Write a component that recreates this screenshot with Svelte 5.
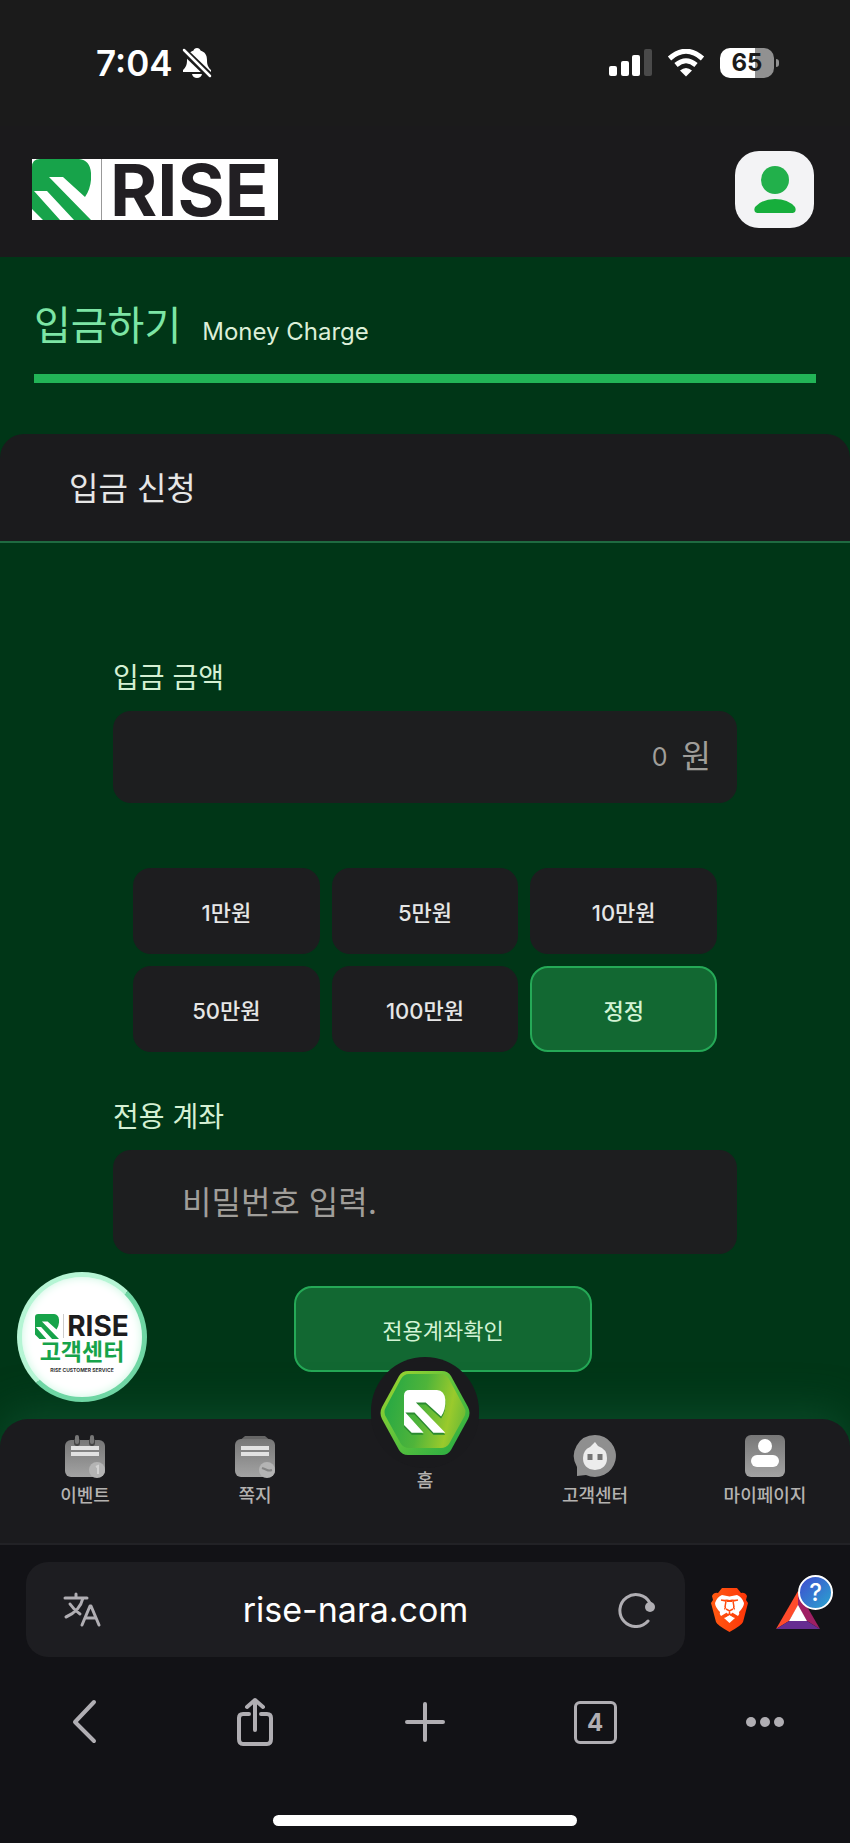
<script>
  let amount = $state('')
  let password = $state('')
  let address = $state('rise-nara.com')

  const presets = [
    { label: '1만원', value: 10000 },
    { label: '5만원', value: 50000 },
    { label: '10만원', value: 100000 },
    { label: '50만원', value: 500000 },
    { label: '100만원', value: 1000000 }
  ]

  function addAmount(value) {
    amount = String(Number(amount || 0) + value)
  }

  function resetAmount() {
    amount = ''
  }
</script>

{#snippet emblem(color)}
  <path fill={color} d="M0 50V8Q0 0 8 0H47Q58 1 59 14Q60 28 53 38L31 18H17L59 61H42L15 32H2L28 61H11Z" />
{/snippet}

<div class="app">
  <div class="status">
    <div class="status-side">
      <span class="time">7:04</span>
      <svg width="32" height="32" viewBox="0 0 32 32" aria-label="무음">
        <path fill="#fff" d="M16 1c2 0 3 1 3.500 2.500C24 5 26 8 26 13c0 5 1 7 4 10v2H2v-2c3-3 4-5 4-10 0-5 2-8 6.500-9.500C13 2 14 1 16 1zM11 27h10c-.5 2.500-2.500 4-5 4s-4.500-1.500-5-4z" />
        <path stroke="#1b1b1b" stroke-width="7" d="M1 2L30 30" />
        <path stroke="#fff" stroke-width="2.500" stroke-linecap="round" d="M3 3L29 29" />
      </svg>
    </div>
    <div class="status-side right">
      <svg width="43" height="28" viewBox="0 0 43 28" aria-hidden="true">
        <rect x="0" y="17" width="8" height="10" rx="2" fill="#fff" />
        <rect x="12" y="12" width="8" height="15" rx="2" fill="#fff" />
        <rect x="23" y="6" width="8" height="21" rx="2" fill="#fff" />
        <rect x="35" y="0" width="8" height="27" rx="2" fill="#4a4a4a" />
      </svg>
      <svg width="38" height="28" viewBox="0 0 38 28" aria-hidden="true">
        <path fill="none" stroke="#fff" stroke-width="5" d="M2.500 9.500Q19-5 35.500 9.500M9 16Q19 7.500 29 16" />
        <path fill="#fff" d="M19 27.500l-6-6q6-5 12 0z" />
      </svg>
      <div class="battery"><span>65</span></div>
    </div>
  </div>

  <header>
    <a class="logo" href="#home" aria-label="RISE">
      <svg width="59" height="61" viewBox="0 0 59 61">{@render emblem('#17a34a')}</svg>
      <span>RISE</span>
    </a>
    <button class="profile" aria-label="내 정보">
      <svg width="42" height="48" viewBox="0 0 42 48">
        <circle cx="21" cy="14" r="14" fill="#22b04b" />
        <path fill="#17ae3c" d="M3 47Q-1 46 1 41Q8 33 21 33T41 41Q43 46 39 47Z" />
      </svg>
    </button>
  </header>

  <main>
    <div class="page-title">
      <h1>입금하기</h1>
      <span>Money Charge</span>
    </div>

    <h2>입금 신청</h2>

    <form onsubmit={(e) => e.preventDefault()}>
      <label for="amount">입금 금액</label>
      <div class="field amount">
        <input id="amount" type="text" inputmode="numeric" placeholder="0" bind:value={amount} />
        <span>원</span>
      </div>

      <div class="presets">
        {#each presets as preset}
          <button type="button" onclick={() => addAmount(preset.value)}>{preset.label}</button>
        {/each}
        <button type="button" class="green" onclick={resetAmount}>정정</button>
      </div>

      <label for="password">전용 계좌</label>
      <div class="field password">
        <input id="password" type="password" placeholder="비밀번호 입력." bind:value={password} />
      </div>

      <button class="submit green">전용계좌확인</button>
    </form>
  </main>

  <div class="bottom">
    <a class="support" href="#support">
      <span class="support-logo">
        <svg width="24" height="25" viewBox="0 0 59 61">{@render emblem('#17a34a')}</svg>
        <b>RISE</b>
      </span>
      <strong>고객센터</strong>
      <small>RISE CUSTOMER SERVICE</small>
    </a>

    <nav class="tabs">
      <a href="#event">
        <svg width="44" height="44" viewBox="0 0 44 44">
          <defs>
            <linearGradient id="metal" x1="0" y1="0" x2="0" y2="1">
              <stop offset="0" stop-color="#777" />
              <stop offset="1" stop-color="#a3a3a3" />
            </linearGradient>
          </defs>
          <rect x="2" y="6" width="40" height="37" rx="6" fill="url(#metal)" />
          <path stroke="#444" stroke-width="6" stroke-linecap="round" d="M14 7v2M29 7v2" />
          <path stroke="#777" stroke-width="4" stroke-linecap="round" d="M14 3v5M29 3v5" />
          <path stroke="#e2e2e2" stroke-width="4" d="M8 14h28M8 20h28" />
          <circle cx="34" cy="36" r="8" fill="#b4b4b4" />
          <path stroke="#d2d2d2" stroke-width="2" fill="none" d="M33 33l2-1v8" />
        </svg>
        이벤트
      </a>
      <a href="#message">
        <svg width="44" height="44" viewBox="0 0 44 44">
          <path d="M12 2h20l7 6H5z" fill="#666" />
          <rect x="2" y="5" width="40" height="38" rx="6" fill="url(#metal)" />
          <path stroke="#e2e2e2" stroke-width="4" d="M8 14h28M8 20h28" />
          <circle cx="34" cy="36" r="8" fill="#b4b4b4" />
          <path stroke="#858585" stroke-width="2" fill="none" d="M29 34q3 1 5 2t5 0" />
        </svg>
        쪽지
      </a>
      <a class="home" href="#home">
        <span class="disc">
          <svg width="90" height="84" viewBox="0 0 90 84">
            <defs>
              <linearGradient id="hex" x1="0" y1="0.4" x2="1" y2="0.6">
                <stop offset="0" stop-color="#27a844" />
                <stop offset="0.45" stop-color="#4fb43a" />
                <stop offset="0.8" stop-color="#9aca2c" />
                <stop offset="1" stop-color="#6dbb35" />
              </linearGradient>
              <linearGradient id="rim" x1="0" y1="0" x2="1" y2="1">
                <stop offset="0" stop-color="#a5d62e" />
                <stop offset="0.5" stop-color="#5cc23c" />
                <stop offset="1" stop-color="#22a943" />
              </linearGradient>
            </defs>
            <path fill="url(#rim)" d="M28 0H62Q68 0 71 5L88 36Q91 42 88 48L71 79Q68 84 62 84H28Q22 84 19 79L2 48Q-1 42 2 36L19 5Q22 0 28 0Z" />
            <path fill="url(#hex)" d="M29 3H61Q66 3 69 8L84 36Q87 41 84 46L69 73Q66 77 61 77H29Q24 77 21 73L6 46Q3 41 6 36L21 8Q24 3 29 3Z" />
            <g transform="translate(24 21) scale(0.7)">{@render emblem('#2b8a30')}</g>
            <g transform="translate(24 19) scale(0.7)">{@render emblem('#fff')}</g>
          </svg>
        </span>
        홈
      </a>
      <a href="#help">
        <svg width="44" height="44" viewBox="0 0 44 44">
          <path fill="#8f8f8f" d="M22 1a21 21 0 1 1-9 40l-9 1V33A21 21 0 0 1 22 1z" />
          <path fill="#ececec" d="M22 8l3 4q9 3 9 12 0 11-12 12-12-1-12-12 0-8 7-11z" />
          <path stroke="#757575" stroke-width="5" d="M17 20v6M27 20v6" />
        </svg>
        고객센터
      </a>
      <a href="#mypage">
        <svg width="44" height="44" viewBox="0 0 44 44">
          <rect x="2" y="1" width="40" height="42" rx="6" fill="url(#metal)" />
          <circle cx="22" cy="12" r="7" fill="#fff" />
          <rect x="8" y="21" width="28" height="12" rx="6" fill="#fff" />
        </svg>
        마이페이지
      </a>
    </nav>
  </div>

  <footer>
    <div class="address-row">
      <div class="address">
        <button class="translate" aria-label="번역">
          <svg width="38" height="35" viewBox="0 0 38 35">
            <path fill="none" stroke="#b0aeb3" stroke-width="3" stroke-linecap="round" stroke-linejoin="round" d="M2 6H24M13 2v4M20 6Q17 19 3 25M7 12Q11 18 17 22M19 33L27 14H28L36 33M22 26H33" />
          </svg>
        </button>
        <input type="text" aria-label="주소" bind:value={address} />
        <button aria-label="새로고침">
          <svg width="38" height="36" viewBox="0 0 38 36">
            <path fill="none" stroke="#b0aeb3" stroke-width="3" stroke-linecap="round" d="M32 11A16 16 0 1 0 30 29" />
            <circle cx="32" cy="15" r="5" fill="#b0aeb3" />
          </svg>
        </button>
      </div>
      <button class="ext" aria-label="Brave Shields">
        <svg width="37" height="44" viewBox="0 0 37 44">
          <defs>
            <linearGradient id="lion" x1="0" y1="0" x2="1" y2="0">
              <stop offset="0" stop-color="#ff5a12" />
              <stop offset="1" stop-color="#ff3508" />
            </linearGradient>
          </defs>
          <path fill="url(#lion)" d="M11 0H26L30 5Q34 4 36 8L35 12L37 15L32 34Q31 37 18.500 44Q6 37 5 34L0 15L2 12L1 8Q3 4 7 5Z" />
          <path fill="#fff" d="M11 7L18.500 8.500L26 7Q31 9 33 15Q33 19 28 24Q29 26 27 28L22 25Q21 24 23 23L24 20L22 18L21 13L27 12L21 11.500L18.500 12L16 11.500L10 12L16 13L15 18L13 20L14 23Q16 24 15 25L10 28Q8 26 9 24Q4 19 4 15Q6 9 11 7Z" />
          <path fill="#fff" d="M15 14h7v6l2 3-5.500 4-5.500-4 2-3z" />
          <path fill="#fff" d="M18.500 27L24 30L18.500 35L13 30Z" />
          <path fill="none" stroke="#ff4a0d" stroke-width="1.500" d="M10 12l5 1-1 6M27 12l-5 1 1 6M15 21l3.500 2L22 21M18.500 23v3l-5 3M18.500 26l5 3" />
        </svg>
      </button>
      <button class="ext rewards" aria-label="Brave Rewards">
        <svg width="44" height="38" viewBox="0 0 44 38">
          <path fill="#ff4b2b" d="M22 0V15L13 30L0 38Z" />
          <path fill="#9e1f63" d="M22 0L44 38L31 30L22 15Z" />
          <path fill="#662d91" d="M0 38L13 30H31L44 38Z" />
          <path fill="#fff" d="M22 14L31 30H13Z" />
        </svg>
        <span class="badge">?</span>
      </button>
    </div>

    <div class="toolbar">
      <button aria-label="뒤로">
        <svg width="48" height="48" viewBox="0 0 48 48"><path d="M33 4L14 24L33 43" /></svg>
      </button>
      <button aria-label="공유">
        <svg width="48" height="50" viewBox="0 0 48 50">
          <path d="M18 17H12Q8 17 8 21V42Q8 47 12 47H36Q40 47 40 42V21Q40 17 36 17H30M24 33V3M16 10L24 3L32 10" />
        </svg>
      </button>
      <button aria-label="새 탭">
        <svg width="48" height="48" viewBox="0 0 48 48"><path d="M24 6V42M6 24H42" /></svg>
      </button>
      <button aria-label="탭"><span class="count">4</span></button>
      <button aria-label="메뉴">
        <svg width="40" height="12" viewBox="0 0 40 12" class="dots">
          <circle cx="6" cy="6" r="5" /><circle cx="20" cy="6" r="5" /><circle cx="34" cy="6" r="5" />
        </svg>
      </button>
    </div>
    <div class="indicator"></div>
  </footer>
</div>

<style>
  :global(body) {
    background: #121216;
  }

  .app {
    display: flex;
    flex-direction: column;
    min-height: 100vh;
    background: #003617;
    color: #e6e6e6;
    font-family: Inter, "Noto Sans CJK KR", sans-serif;
  }

  .app * {
    box-sizing: border-box;
  }

  button {
    padding: 0;
    border: 0;
    background: none;
    color: inherit;
    font: inherit;
    cursor: pointer;
  }

  input {
    min-width: 0;
    padding: 0;
    border: 0;
    outline: 0;
    background: none;
    color: #e6e6e6;
    font: inherit;
  }

  a {
    color: inherit;
    text-decoration: none;
  }

  svg {
    display: block;
    flex: none;
  }

  /* status bar */
  .status {
    display: flex;
    justify-content: space-between;
    align-items: center;
    height: 126px;
    padding: 0 70px 0 96px;
    background: #1b1b1b;
  }

  .status-side {
    display: flex;
    align-items: center;
    gap: 8px;
  }

  .right {
    gap: 15px;
  }

  .time {
    color: #fff;
    font-size: 35px;
    font-weight: 600;
  }

  .battery {
    position: relative;
    width: 54px;
    height: 30px;
    margin-right: 6px;
    border-radius: 10px;
    background: linear-gradient(90deg, #fff 65%, #919191 65%);
    color: #1b1b1b;
    font-size: 24px;
    font-weight: 700;
    line-height: 30px;
    text-align: center;
  }

  .battery::after {
    content: "";
    position: absolute;
    top: 11px;
    right: -5px;
    width: 3px;
    height: 8px;
    border-radius: 0 4px 4px 0;
    background: #919191;
  }

  /* site header */
  header {
    display: flex;
    justify-content: space-between;
    align-items: center;
    height: 131px;
    padding: 0 36px 4px 32px;
    background: #1b1a1c;
  }

  .logo {
    display: flex;
    width: 246px;
    height: 61px;
    background: #fff;
  }

  .logo span {
    margin-left: 10px;
    padding-left: 8px;
    border-left: 1px solid #999;
    color: #221f23;
    font-size: 72px;
    font-weight: 700;
    line-height: 61px;
  }

  .profile {
    display: grid;
    place-items: center;
    width: 79px;
    height: 77px;
    border-radius: 24px;
    background: #f3f3f5;
  }

  /* page */
  main {
    flex: 1;
    padding-bottom: 44px;
  }

  .page-title {
    display: flex;
    align-items: baseline;
    gap: 21px;
    margin: 0 34px;
    padding: 39px 0 18px;
    border-bottom: 9px solid #22b457;
  }

  .page-title span {
    color: #dcefd8;
    font-size: 24px;
  }

  h1 {
    margin: 0;
    color: #7de5a5;
    font-size: 40px;
    font-weight: 400;
    line-height: 60px;
  }

  h2 {
    margin: 51px 0 0;
    padding: 3px 69px 0;
    border-bottom: 2px solid #1f6a41;
    border-radius: 24px 24px 0 0;
    background: #1b1b1d;
    font-size: 32px;
    font-weight: 400;
    line-height: 104px;
  }

  form {
    display: flex;
    flex-direction: column;
    margin: 0 113px;
    padding-top: 115px;
  }

  label {
    color: #d5f0d3;
    font-size: 28px;
    line-height: 40px;
  }

  .field {
    display: flex;
    align-items: center;
    margin-top: 13px;
    border-radius: 18px;
    background: #1d1e1f;
    color: #a09e9a;
  }

  .field input {
    flex: 1;
  }

  .field input::placeholder {
    color: #a09e9a;
    opacity: 1;
  }

  .amount {
    height: 92px;
    gap: 14px;
    padding: 0 26px;
    font-size: 32px;
  }

  .amount input {
    font-size: 25px;
    text-align: right;
  }

  .amount span {
    line-height: 32px;
  }

  .password {
    height: 104px;
    padding: 0 69px;
    font-size: 32px;
  }

  .presets {
    display: grid;
    grid-template-columns: repeat(3, 1fr);
    gap: 12px;
    margin: 65px 20px 45px;
  }

  .presets button,
  .submit {
    height: 86px;
    border-radius: 18px;
    background: #1d1d1f;
    font-size: 22px;
    font-weight: 500;
  }

  .presets .green,
  .submit {
    border: 2px solid #25a957;
    background: #126832;
    color: #d3f3d5;
  }

  .submit {
    width: 298px;
    margin: 32px 0 0 181px;
    font-weight: 400;
  }

  /* site tab bar */
  .bottom {
    position: relative;
  }

  .support {
    position: absolute;
    bottom: 141px;
    left: 17px;
    display: flex;
    flex-direction: column;
    align-items: center;
    width: 130px;
    height: 130px;
    padding-top: 37px;
    border: 5px solid;
    border-color: #b5f5d4 #6fd6a4 #6fd6a4 #b5f5d4;
    border-radius: 50%;
    background: #fff;
    box-shadow: inset 0 0 10px #c9f7e0;
    color: #17a34a;
  }

  .support-logo {
    display: flex;
    align-items: center;
    gap: 4px;
    height: 24px;
  }

  .support-logo b {
    padding-left: 3px;
    border-left: 1px solid #ccc;
    color: #1d1d1f;
    font-size: 28px;
    font-weight: 700;
    line-height: 24px;
  }

  .support strong {
    font-size: 23px;
    line-height: 28px;
  }

  .support small {
    color: #333;
    font-size: 5px;
    font-weight: 700;
    line-height: 8px;
    white-space: nowrap;
  }

  .tabs {
    display: grid;
    grid-template-columns: repeat(5, 1fr);
    height: 124px;
    border-radius: 28px 28px 0 0;
    background: #1b1b1e;
    box-shadow: 0 -8px 40px #0a4a29;
    color: #b4b2b0;
    font-size: 18px;
    font-weight: 500;
    line-height: 24px;
  }

  .tabs a {
    display: flex;
    flex-direction: column;
    align-items: center;
    gap: 6px;
    padding-top: 15px;
  }

  .tabs .home {
    gap: 1px;
    margin-top: -62px;
    padding: 0;
  }

  .disc {
    display: grid;
    place-items: center;
    width: 108px;
    height: 111px;
    border-radius: 54px;
    background: #1a1a1d;
  }

  /* browser chrome */
  footer {
    position: relative;
    padding: 17px 0;
    border-top: 2px solid #222226;
    background: #121216;
  }

  .address-row {
    display: flex;
    align-items: center;
    padding: 0 30px 0 26px;
  }

  .address {
    display: flex;
    flex: 1;
    min-width: 0;
    height: 95px;
    border-radius: 22px;
    background: #1d1d21;
  }

  .address button {
    display: grid;
    place-items: center;
    flex: 0 0 96px;
  }

  .address .translate {
    padding-left: 16px;
  }

  .address input {
    flex: 1;
    color: #fff;
    font-size: 34px;
    text-align: center;
  }

  .ext {
    position: relative;
    margin-left: 26px;
  }

  .rewards {
    margin-left: 28px;
  }

  .badge {
    position: absolute;
    right: -13px;
    bottom: 19px;
    width: 35px;
    height: 35px;
    border: 2px solid #fff;
    border-radius: 50%;
    background: linear-gradient(135deg, #3f4bd0, #2aa5cf);
    color: #fff;
    font-size: 24px;
    font-weight: 500;
    line-height: 31px;
  }

  .toolbar {
    display: grid;
    grid-template-columns: repeat(5, 1fr);
    height: 130px;
  }

  .toolbar button {
    display: grid;
    place-items: center;
    color: #b0aeb3;
  }

  .toolbar svg {
    fill: none;
    stroke: #b0aeb3;
    stroke-width: 4;
    stroke-linecap: round;
    stroke-linejoin: round;
  }

  .toolbar .dots {
    fill: #b0aeb3;
    stroke: none;
  }

  .count {
    width: 43px;
    height: 43px;
    border: 3px solid #b0aeb3;
    border-radius: 6px;
    font-size: 24px;
    font-weight: 700;
    line-height: 37px;
  }

  .indicator {
    width: 304px;
    max-width: 80%;
    height: 11px;
    margin: 28px auto 0;
    border-radius: 6px;
    background: #fff;
  }
</style>
